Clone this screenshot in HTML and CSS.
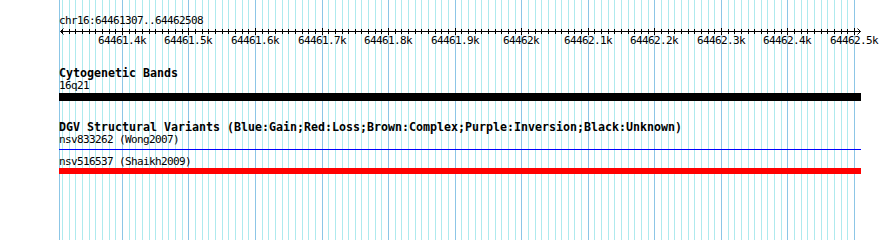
FILE: index.html
```html
<!DOCTYPE html>
<html lang="en">

<head>
    <meta charset="utf-8">
    <title>chr16:64461307..64462508</title>
    <link rel="stylesheet" href="styles.css">
</head>

<body>
    <div class="panel">
        <!-- grid lines go behind all tracks -->
        <svg class="grid" id="grid" width="890" height="240"></svg>

        <div class="track ruler">
            <div class="ruler-label">chr16:64461307..64462508</div>
            <svg class="ruler-axis" id="ruler" width="890" height="20"></svg>
        </div>

        <div class="track cyto">
            <div class="track-title">Cytogenetic Bands</div>
            <div class="feature-label">16q21</div>
            <div class="band"></div>
        </div>

        <div class="track dgv">
            <div class="track-title">DGV Structural Variants (Blue:Gain;Red:Loss;Brown:Complex;Purple:Inversion;Black:Unknown)</div>
            <div class="feature-label first">nsv833262 (Wong2007)</div>
            <div class="variant gain"></div>
            <div class="feature-label second">nsv516537 (Shaikh2009)</div>
            <div class="variant loss"></div>
        </div>
    </div>

    <script>
        const START = 64461307;
        const END = 64462508;
        const LEFT = 60;
        const WIDTH = 800;
        const scale = WIDTH / (END - START + 1);
        const SVG_NS = 'http://www.w3.org/2000/svg';

        function mapPt(pos) {
            return LEFT + Math.round((pos - START) * scale);
        }

        function addLine(svg, x1, y1, x2, y2, cls) {
            const l = document.createElementNS(SVG_NS, 'line');
            l.setAttribute('x1', x1);
            l.setAttribute('y1', y1);
            l.setAttribute('x2', x2);
            l.setAttribute('y2', y2);
            l.setAttribute('class', cls);
            svg.appendChild(l);
        }

        const grid = document.getElementById('grid');
        const ruler = document.getElementById('ruler');

        // left edge of the panel
        addLine(grid, 59.5, 0, 59.5, 240, 'grid-major');

        // axis with arrow heads on both ends
        const axisY = 5.5;
        addLine(ruler, LEFT + 0.5, axisY, 860.5, axisY, 'axis');
        addLine(ruler, LEFT + 0.5, axisY, LEFT + 3.5, axisY - 3, 'axis');
        addLine(ruler, LEFT + 0.5, axisY, LEFT + 3.5, axisY + 3, 'axis');
        addLine(ruler, 860.5, axisY, 857.5, axisY - 3, 'axis');
        addLine(ruler, 860.5, axisY, 857.5, axisY + 3, 'axis');

        for (let pos = Math.ceil(START / 10) * 10; pos <= END; pos += 10) {
            const x = mapPt(pos) + 0.5;
            const major = pos % 100 === 0;
            addLine(grid, x, 0, x, 240, major ? 'grid-major' : 'grid-minor');

            if (major) {
                addLine(ruler, x, 2, x, 9, 'axis');
                const label = document.createElementNS(SVG_NS, 'text');
                label.setAttribute('x', x - 0.5);
                label.setAttribute('y', 18);
                label.setAttribute('class', 'tick-label');
                const kb = pos / 1000;
                label.textContent = (pos % 1000 === 0 ? kb.toFixed(0) : kb.toFixed(1)) + 'k';
                ruler.appendChild(label);
            } else {
                addLine(ruler, x, 3, x, 8, 'axis');
            }
        }
    </script>
</body>

</html>
```

FILE: styles.css
```css
body {
    margin: 0;
    padding: 0;
    background-color: #ffffff;
    color: #000000;
    font-family: "DejaVu Sans Mono", monospace;
}

.panel {
    position: relative;
    width: 890px;
    height: 240px;
    overflow: hidden;
}

.grid {
    position: absolute;
    top: 0;
    left: 0;
}

.grid-minor {
    stroke: #aeeaee;
    stroke-width: 1;
}

.grid-major {
    stroke: #8cc6e6;
    stroke-width: 1;
}

.track {
    position: relative;
}

.ruler {
    padding-top: 16px;
}

.ruler-axis {
    display: block;
}

.axis {
    stroke: #000000;
    stroke-width: 1;
}

/* small text: 11px glyphs squeezed to a 6px cell */
.tick-label {
    font-family: "DejaVu Sans Mono", monospace;
    font-size: 11px;
    letter-spacing: -0.62px;
    fill: #000000;
    text-anchor: middle;
}

.ruler-label,
.feature-label {
    padding-left: 59px;
    height: 10px;
    font-size: 11px;
    letter-spacing: -0.62px;
    line-height: 10px;
    white-space: nowrap;
}

.track-title {
    padding-left: 59px;
    height: 11px;
    font-size: 11.63px;
    font-weight: bold;
    line-height: 10px;
    white-space: nowrap;
}

.cyto {
    margin-top: 22px;
}

.feature-label {
    margin-top: 2px;
}

.band {
    margin: 2px 0 0 59px;
    width: 802px;
    height: 8px;
    background-color: #000000;
}

.dgv {
    margin-top: 21px;
}

.feature-label.first {
    margin-top: 2px;
}

.feature-label.second {
    margin-top: 7px;
}

.variant {
    margin-left: 59px;
    width: 802px;
}

.variant.gain {
    margin-top: 4px;
    height: 1px;
    background-color: #0000ff;
}

.variant.loss {
    margin-top: 1px;
    height: 6px;
    background-color: #ff0000;
}
```
